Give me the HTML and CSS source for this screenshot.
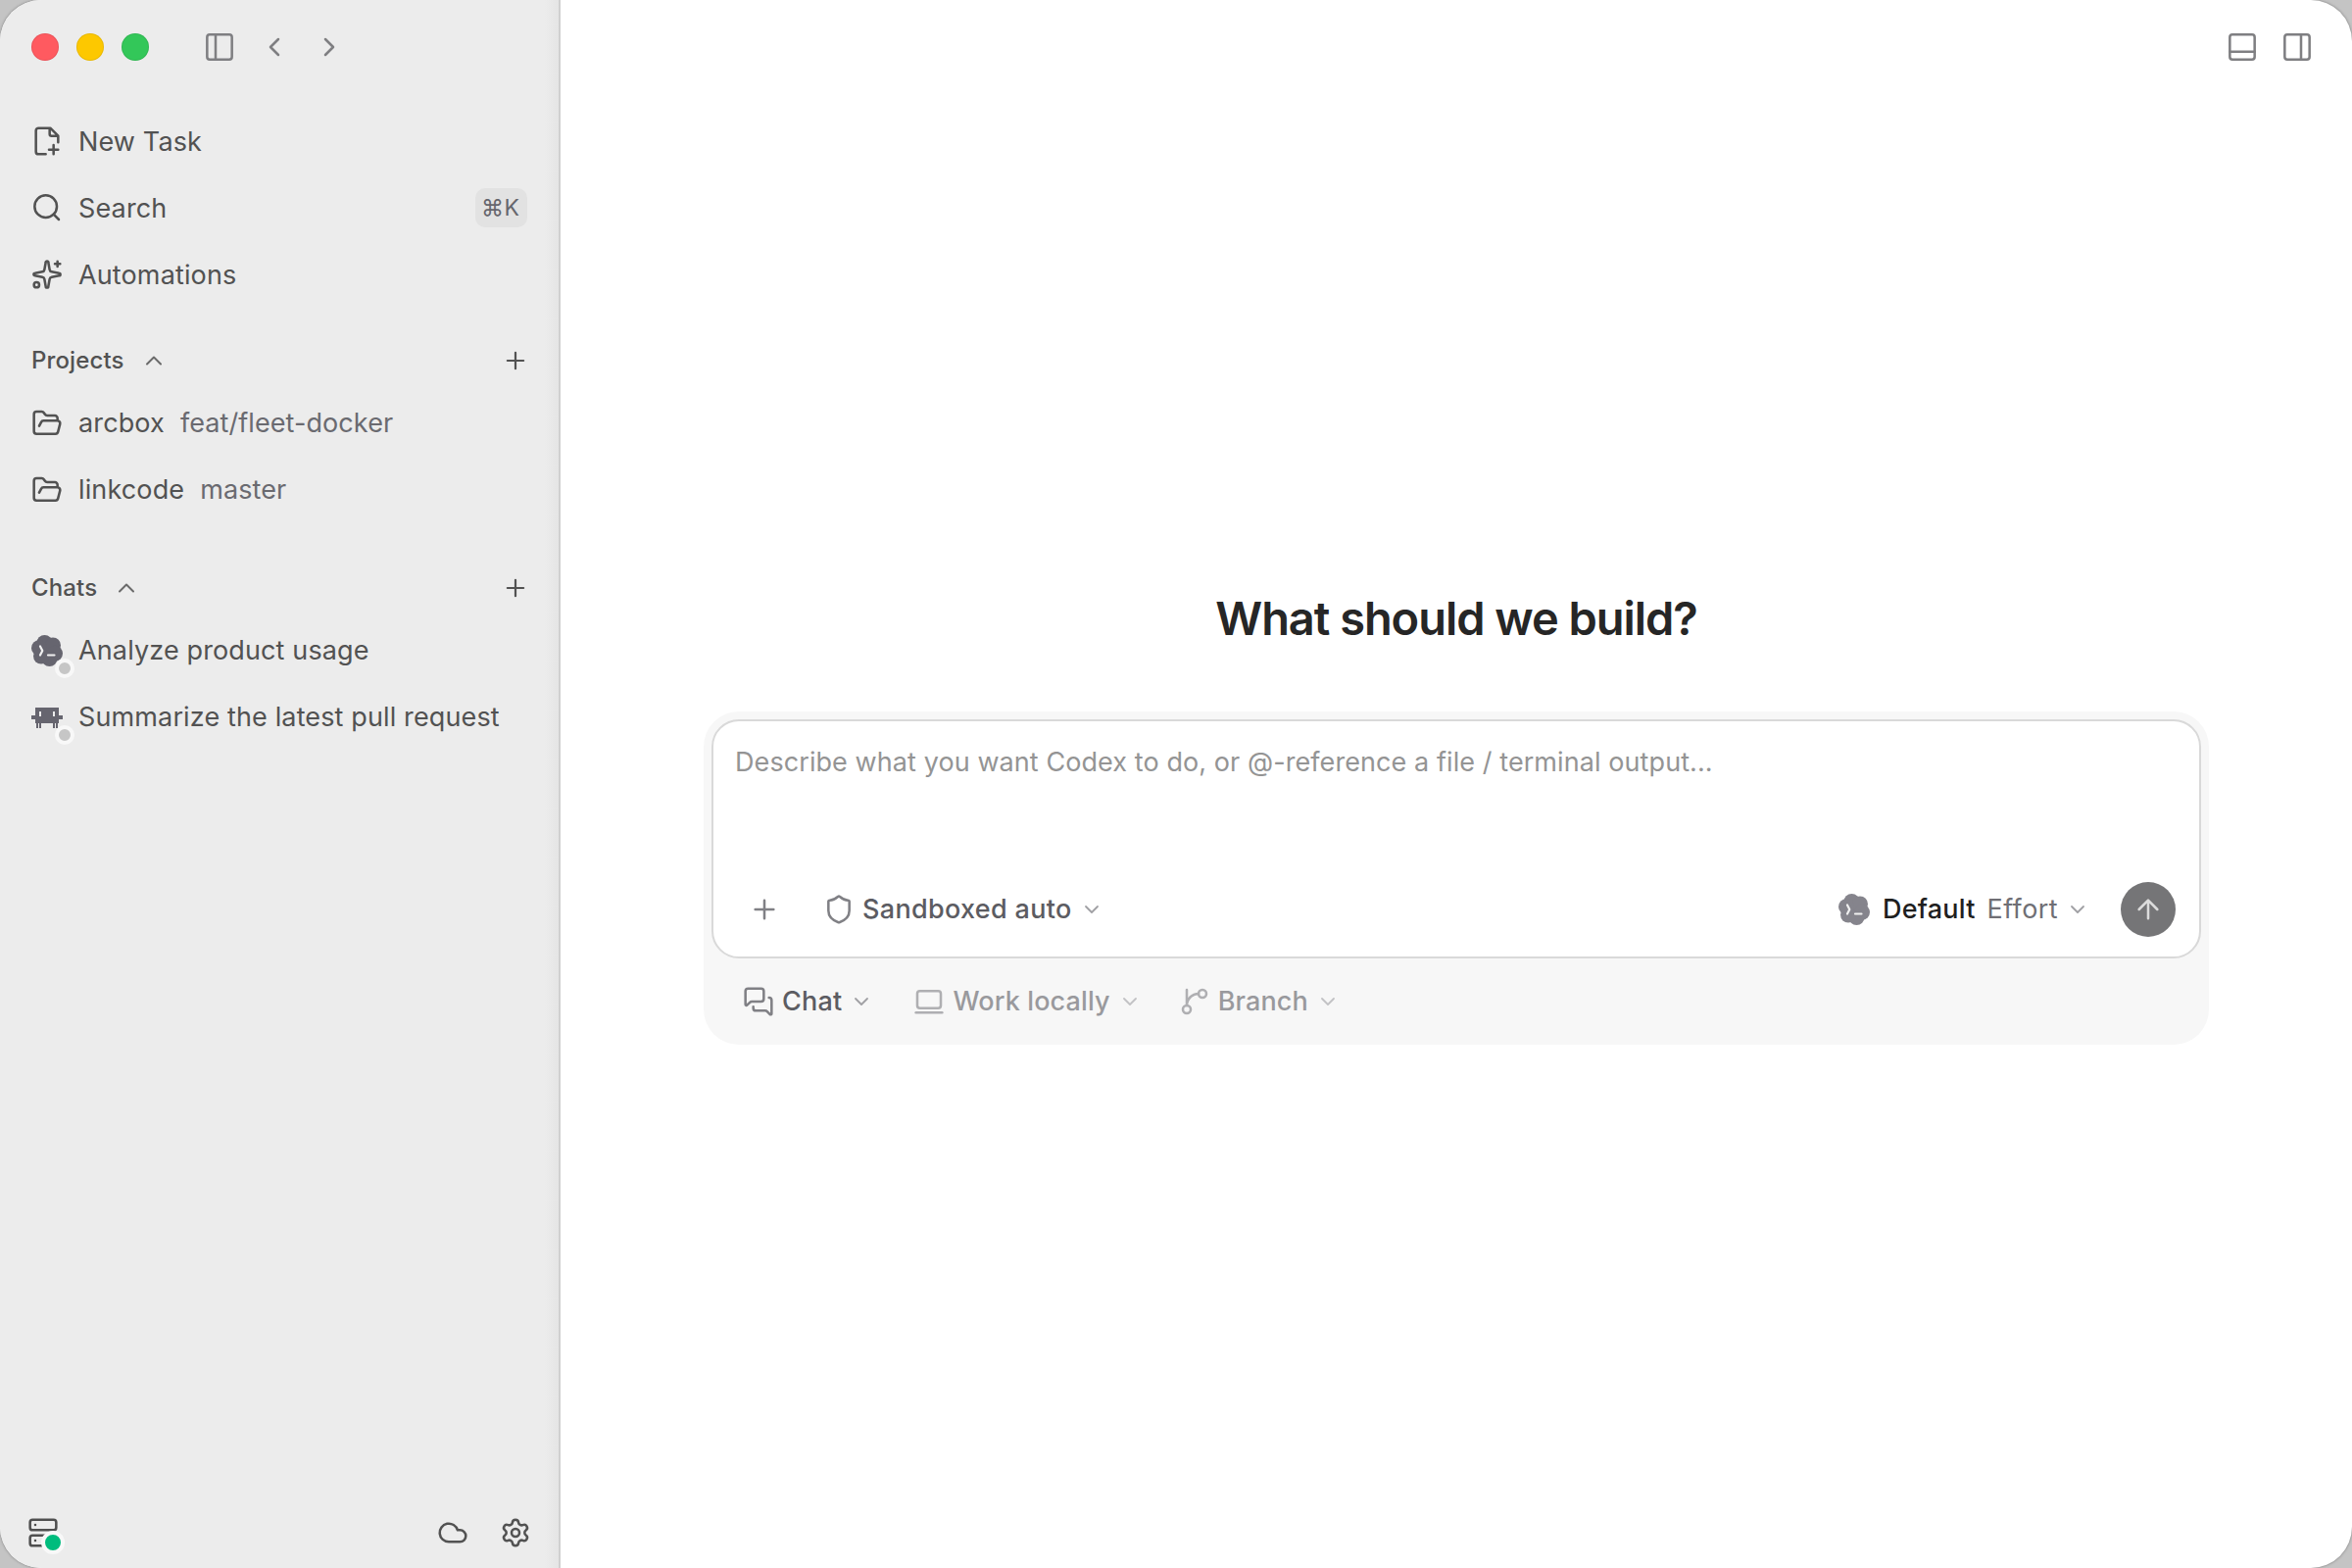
FILE: index.html
```html
<!DOCTYPE html>
<html lang="en">
<head>
    <meta charset="UTF-8">
    <meta name="viewport" content="width=device-width, initial-scale=1.0">
    <title>New Task</title>
    <link rel="stylesheet" href="styles.css">
</head>
<body>

    <!-- Icon set -->
    <svg class="sprite">
        <symbol id="panel-left" viewBox="0 0 24 24"><rect x="2.5" y="2.5" width="19" height="19" rx="2"/><path d="M9 2.5v19"/></symbol>
        <symbol id="panel-bottom" viewBox="0 0 24 24"><rect x="2.5" y="2.5" width="19" height="19" rx="2"/><path d="M2.5 15.5h19"/></symbol>
        <symbol id="panel-right" viewBox="0 0 24 24"><rect x="2.5" y="2.5" width="19" height="19" rx="2"/><path d="M15 2.5v19"/></symbol>
        <symbol id="chevron-left" viewBox="0 0 24 24"><path d="m15 18-6-6 6-6"/></symbol>
        <symbol id="chevron-right" viewBox="0 0 24 24"><path d="m9 18 6-6-6-6"/></symbol>
        <symbol id="chevron-up" viewBox="0 0 24 24"><path d="m18 15-6-6-6 6"/></symbol>
        <symbol id="chevron-down" viewBox="0 0 24 24"><path d="m6 9 6 6 6-6"/></symbol>
        <symbol id="plus" viewBox="0 0 24 24"><path d="M5 12h14M12 5v14"/></symbol>
        <symbol id="arrow-up" viewBox="0 0 24 24"><path d="m5 12 7-7 7 7M12 19V5"/></symbol>
        <symbol id="new-file" viewBox="0 0 24 24"><path d="M11 22H5.500a2 2 0 0 1-2-2V4a2 2 0 0 1 2-2h9L20.500 8v5M14 2v4.500a1.500 1.500 0 0 0 1.500 1.500h5M13.500 18.500h7M17 15v7"/></symbol>
        <symbol id="search" viewBox="0 0 24 24"><circle cx="11" cy="11" r="8.500"/><path d="m21 21-4-4"/></symbol>
        <symbol id="sparkles" viewBox="0 0 24 24"><path d="M11 2.800a1 1 0 0 1 2 0l1 5.600a2 2 0 0 0 1.600 1.600l5.600 1a1 1 0 0 1 0 2l-5.600 1a2 2 0 0 0-1.600 1.600l-1 5.600a1 1 0 0 1-2 0l-1-5.600a2 2 0 0 0-1.600-1.600l-5.600-1a1 1 0 0 1 0-2l5.600-1a2 2 0 0 0 1.600-1.600zM20 2v4M22 4h-4"/><circle cx="4" cy="20" r="2"/></symbol>
        <symbol id="folder" viewBox="0 0 24 24"><path d="m6 14 1.500-2.900A2 2 0 0 1 9.240 10H20a2 2 0 0 1 1.940 2.500l-1.540 6a2 2 0 0 1-1.950 1.500H4a2 2 0 0 1-2-2V5a2 2 0 0 1 2-2h3.900a2 2 0 0 1 1.690.9l.810 1.200a2 2 0 0 0 1.670.9H18a2 2 0 0 1 2 2v2"/></symbol>
        <symbol id="server" viewBox="0 0 24 24"><rect x="2" y="2" width="20" height="8" rx="2"/><rect x="2" y="14" width="20" height="8" rx="2"/><path d="M6 6h.01M6 18h.01"/></symbol>
        <symbol id="cloud" viewBox="0 0 24 24"><path d="M17.500 19H9a7 7 0 1 1 6.710-9h1.790a4.500 4.500 0 1 1 0 9z"/></symbol>
        <symbol id="settings" viewBox="0 0 24 24"><path d="M9.670 4.140a2.340 2.340 0 0 1 4.660 0 2.340 2.340 0 0 0 3.320 1.910 2.340 2.340 0 0 1 2.330 4.030 2.340 2.340 0 0 0 0 3.840 2.340 2.340 0 0 1-2.330 4.030 2.340 2.340 0 0 0-3.320 1.910 2.340 2.340 0 0 1-4.660 0 2.340 2.340 0 0 0-3.320-1.910 2.340 2.340 0 0 1-2.330-4.030 2.340 2.340 0 0 0 0-3.840 2.340 2.340 0 0 1 2.330-4.030 2.340 2.340 0 0 0 3.320-1.910"/><circle cx="12" cy="12" r="3"/></symbol>
        <symbol id="shield" viewBox="0 0 24 24"><path d="M20 13c0 5-3.500 7.500-7.660 8.950a1 1 0 0 1-.670-.010C7.500 20.500 4 18 4 13V6a1 1 0 0 1 1-1c2 0 4.500-1.200 6.240-2.720a1.170 1.170 0 0 1 1.520 0C14.510 3.810 17 5 19 5a1 1 0 0 1 1 1z"/></symbol>
        <symbol id="messages" viewBox="0 0 24 24"><path d="M16 10a2 2 0 0 1-2 2H6.830a2 2 0 0 0-1.420.590l-2.200 2.200A.710.710 0 0 1 2 14.290V4a2 2 0 0 1 2-2h10a2 2 0 0 1 2 2zM20 9a2 2 0 0 1 2 2v10.290a.710.710 0 0 1-1.210.500l-2.200-2.200a2 2 0 0 0-1.420-.590H10a2 2 0 0 1-2-2v-1"/></symbol>
        <symbol id="laptop" viewBox="0 0 24 24"><rect x="3" y="4" width="18" height="13" rx="2"/><path d="M2 20.500h20"/></symbol>
        <symbol id="branch" viewBox="0 0 24 24"><path d="M15 6a9 9 0 0 0-9 9V3"/><circle cx="18" cy="6" r="3"/><circle cx="6" cy="18" r="3"/></symbol>
        <symbol id="codex" viewBox="0 0 32 32">
            <g fill="currentColor" stroke="none"><circle cx="16" cy="16" r="13.2"/><circle cx="13.500" cy="8" r="8"/><circle cx="22" cy="10.500" r="8"/><circle cx="24" cy="18.800" r="8"/><circle cx="18.500" cy="24" r="8"/><circle cx="10" cy="21.500" r="8"/><circle cx="8" cy="13.200" r="8"/></g>
            <path class="prompt" d="m9 11.500 2.300 4.500L9 20.500M17 20.500h6.500"/>
        </symbol>
        <symbol id="claude" viewBox="0 0 32 32"><path fill="currentColor" stroke="none" fill-rule="evenodd" d="M4 6h24v8h4v4h-4v4h-1v5h-2v-5h-1v5h-2v-5H10v5H8v-5H7v5H5v-5H4v-4H0v-4h4zM8 10v5h2v-5zM22 10v5h2v-5z"/></symbol>
    </svg>

    <div class="window">

        <aside class="sidebar">
            <div class="titlebar">
                <div class="lights">
                    <span class="light red"></span>
                    <span class="light yellow"></span>
                    <span class="light green"></span>
                </div>
                <svg class="icon"><use href="#panel-left"/></svg>
                <svg class="icon nav-arrow"><use href="#chevron-left"/></svg>
                <svg class="icon nav-arrow"><use href="#chevron-right"/></svg>
            </div>

            <nav class="list menu">
                <a class="row"><svg class="icon"><use href="#new-file"/></svg><span>New Task</span></a>
                <a class="row"><svg class="icon"><use href="#search"/></svg><span>Search</span><kbd class="shortcut"><span class="cmd">⌘</span>K</kbd></a>
                <a class="row"><svg class="icon"><use href="#sparkles"/></svg><span>Automations</span></a>
            </nav>

            <div class="section projects">
                <span>Projects</span>
                <svg class="icon toggle"><use href="#chevron-up"/></svg>
                <svg class="icon add"><use href="#plus"/></svg>
            </div>
            <div class="list">
                <a class="row"><svg class="icon"><use href="#folder"/></svg><span>arcbox</span><span class="ref">feat/fleet-docker</span></a>
                <a class="row"><svg class="icon"><use href="#folder"/></svg><span>linkcode</span><span class="ref">master</span></a>
            </div>

            <div class="section chats">
                <span>Chats</span>
                <svg class="icon toggle"><use href="#chevron-up"/></svg>
                <svg class="icon add"><use href="#plus"/></svg>
            </div>
            <div class="list">
                <a class="row"><span class="agent"><svg class="icon"><use href="#codex"/></svg><i class="dot"></i></span><span>Analyze product usage</span></a>
                <a class="row"><span class="agent"><svg class="icon"><use href="#claude"/></svg><i class="dot"></i></span><span>Summarize the latest pull request</span></a>
            </div>

            <div class="footer">
                <span class="agent host"><svg class="icon"><use href="#server"/></svg><i class="dot online"></i></span>
                <svg class="icon cloud"><use href="#cloud"/></svg>
                <svg class="icon"><use href="#settings"/></svg>
            </div>
        </aside>

        <main class="main">
            <div class="toolbar">
                <svg class="icon"><use href="#panel-bottom"/></svg>
                <svg class="icon"><use href="#panel-right"/></svg>
            </div>

            <h1 class="title">What should we build?</h1>

            <div class="composer">
                <div class="box">
                    <div class="placeholder">Describe what you want Codex to do, or @-reference a file / terminal output...</div>
                    <div class="controls">
                        <svg class="icon attach"><use href="#plus"/></svg>
                        <div class="picker sandbox">
                            <svg class="icon"><use href="#shield"/></svg>
                            <span>Sandboxed auto</span>
                            <svg class="caret"><use href="#chevron-down"/></svg>
                        </div>
                        <div class="picker model">
                            <svg class="icon"><use href="#codex"/></svg>
                            <span class="name">Default</span>
                            <span class="effort">Effort</span>
                            <svg class="caret"><use href="#chevron-down"/></svg>
                        </div>
                        <button class="send"><svg class="icon"><use href="#arrow-up"/></svg></button>
                    </div>
                </div>
                <div class="context">
                    <div class="picker">
                        <svg class="icon"><use href="#messages"/></svg>
                        <span>Chat</span>
                        <svg class="caret"><use href="#chevron-down"/></svg>
                    </div>
                    <div class="picker disabled">
                        <svg class="icon"><use href="#laptop"/></svg>
                        <span>Work locally</span>
                        <svg class="caret"><use href="#chevron-down"/></svg>
                    </div>
                    <div class="picker disabled git">
                        <svg class="icon"><use href="#branch"/></svg>
                        <span>Branch</span>
                        <svg class="caret"><use href="#chevron-down"/></svg>
                    </div>
                </div>
            </div>
        </main>

    </div>

</body>
</html>
```
FILE: styles.css
```css
* {
    box-sizing: border-box;
}

body {
    margin: 0;
    background: #c4c4c4;
    font-family: Inter, sans-serif;
    font-size: 27px;
    line-height: 36px;
    letter-spacing: 0.13px;
    color: #525252;
}

.sprite {
    display: none;
}

.window {
    display: flex;
    width: 2400px;
    height: 1600px;
    border-radius: 42px;
    overflow: hidden;
    background: #fff;
    box-shadow: 0 0 3px #777;
}

.icon {
    width: 32px;
    height: 32px;
    flex-shrink: 0;
    fill: none;
    stroke: currentColor;
    stroke-width: 1.9;
    stroke-linecap: round;
    stroke-linejoin: round;
}

/* Sidebar */
.sidebar {
    display: flex;
    flex-direction: column;
    width: 572px;
    padding: 0 16px;
    border-right: 2px solid #d0d0d0;
    background: linear-gradient(to left, #e5e5e5, #ececec 14px);
}

.titlebar {
    display: flex;
    align-items: center;
    height: 96px;
    padding-left: 16px;
    color: #7f7f82;
}

.lights {
    display: flex;
    gap: 18px;
    margin-right: 56px;
}

.light {
    width: 28px;
    height: 28px;
    border-radius: 50%;
    border: 1px solid rgba(0, 0, 0, 0.08);
}

.red { background: #ff5a60; }
.yellow { background: #fdc800; }
.green { background: #33c759; }

.nav-arrow {
    margin-left: 24px;
}

.list {
    display: flex;
    flex-direction: column;
    gap: 4px;
}

.menu {
    padding-top: 16px;
}

.row {
    display: flex;
    align-items: center;
    gap: 16px;
    height: 64px;
    padding: 0 16px;
    white-space: nowrap;
}

.menu .row > span {
    padding-top: 1px;
}

.ref {
    color: #6a6a70;
    letter-spacing: 0.08px;
}

.shortcut {
    display: flex;
    align-items: center;
    gap: 2px;
    height: 40px;
    margin-left: auto;
    padding: 0 8px;
    border-radius: 10px;
    background: #e2e2e2;
    color: #66666d;
    font: 400 23px Inter, sans-serif;
    letter-spacing: 0;
}

.cmd {
    display: flex;
    justify-content: center;
    width: 20px;
}

.section {
    display: flex;
    align-items: center;
    height: 48px;
    padding: 0 14px 0 16px;
    font-size: 24px;
    font-weight: 500;
}

.projects {
    margin: 32px 0 8px;
}

.chats {
    margin: 44px 0 8px;
}

.toggle {
    width: 28px;
    height: 28px;
    margin-left: 16px;
    stroke-width: 1.7;
    color: #6a6a6a;
}

.add {
    width: 28px;
    height: 28px;
    margin-left: auto;
}

.agent {
    position: relative;
    display: flex;
    color: #66656f;
}

.prompt {
    stroke: #f0f0f0;
    stroke-width: 2.2;
}

.dot {
    position: absolute;
    left: 24px;
    top: 24px;
    width: 20px;
    height: 20px;
    border: 4px solid #f8f8f8;
    border-radius: 50%;
    background: #c6c6c6;
}

.footer {
    display: flex;
    align-items: center;
    gap: 32px;
    height: 72px;
    margin-top: auto;
    padding: 0 12px;
}

.host {
    color: #4f4f4f;
}

.online {
    left: 14px;
    top: 14px;
    width: 24px;
    height: 24px;
    background: #00bc7d;
}

.cloud {
    margin-left: auto;
}

/* Main pane */
.main {
    display: flex;
    flex-direction: column;
    align-items: center;
    flex: 1;
}

.toolbar {
    display: flex;
    align-items: center;
    align-self: flex-end;
    gap: 24px;
    height: 96px;
    padding-right: 40px;
    color: #7f7f82;
}

.title {
    margin: 503px 0 0;
    font-size: 47px;
    font-weight: 600;
    line-height: 64px;
    letter-spacing: -1.05px;
    color: #262626;
}

.composer {
    width: 1536px;
    height: 340px;
    margin-top: 63px;
    padding: 8px;
    border-radius: 36px;
    background: #f7f7f7;
}

.box {
    display: flex;
    flex-direction: column;
    height: 244px;
    padding: 24px 24px 20px 22px;
    border: 2px solid #d9d9d9;
    border-radius: 28px;
    background: #fff;
}

.placeholder {
    color: #949494;
    letter-spacing: 0.08px;
    white-space: nowrap;
}

.controls {
    display: flex;
    align-items: center;
    height: 56px;
    margin-top: auto;
}

.attach {
    margin-left: 14px;
    color: #808085;
}

.picker {
    display: flex;
    align-items: center;
    gap: 8px;
    font-weight: 500;
    letter-spacing: 0.22px;
    color: #5c5c62;
    white-space: nowrap;
}

.picker .icon {
    color: #808085;
}

.caret {
    width: 24px;
    height: 24px;
    fill: none;
    stroke: #a0a0a4;
    stroke-width: 1.8;
    stroke-linecap: round;
    stroke-linejoin: round;
}

.sandbox {
    margin-left: 44px;
    letter-spacing: 0.32px;
}

.model {
    margin-left: auto;
}

.model .icon {
    color: #85848c;
}

.name {
    margin-left: 5px;
    color: #1f1f1f;
}

.effort {
    margin-left: 4px;
    font-weight: 400;
    letter-spacing: 0.4px;
    color: #6f6f75;
}

.send {
    display: flex;
    align-items: center;
    justify-content: center;
    width: 56px;
    height: 56px;
    margin-left: 32px;
    padding: 0;
    border: 0;
    border-radius: 50%;
    background: #757577;
    color: #dcdcdc;
}

.context {
    display: flex;
    align-items: center;
    height: 88px;
    padding-left: 32px;
}

.disabled {
    margin-left: 41px;
    letter-spacing: 0.12px;
    opacity: 0.6;
}

.git {
    margin-left: 38px;
}
```
